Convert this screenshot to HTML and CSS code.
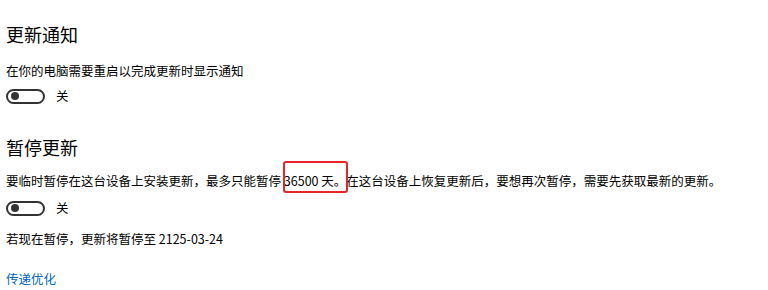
FILE: index.html
```html
<!DOCTYPE html>
<html lang="zh-CN">
<head>
<meta charset="utf-8">
<link rel="stylesheet" href="styles.css">
</head>
<body>
<main class="page">
  <h2 class="title title-first">更新通知</h2>
  <p class="text text-after-title1">在你的电脑需要重启以完成更新时显示通知</p>
  <div class="toggle-row toggle-row-1">
    <span class="toggle"><span class="knob"></span></span>
    <span class="toggle-label">关</span>
  </div>

  <h2 class="title title-second">暂停更新</h2>
  <p class="text text-after-title2">要临时暂停在这台设备上安装更新，最多只能暂停 <span class="mark">36500 天。</span>在这台设备上恢复更新后，要想再次暂停，需要先获取最新的更新。</p>
  <div class="toggle-row toggle-row-2">
    <span class="toggle"><span class="knob"></span></span>
    <span class="toggle-label">关</span>
  </div>
  <p class="text text-pause">若现在暂停，更新将暂停至 2125-03-24</p>
  <a class="link" href="#">传递优化</a>
</main>
</body>
</html>
```
FILE: styles.css
```css
html, body {
  margin: 0;
  padding: 0;
  background: #ffffff;
}

body {
  font-family: "Noto Sans CJK SC", "Noto Sans", sans-serif;
  color: #000000;
}

.page {
  display: flex;
  flex-direction: column;
  align-items: flex-start;
  padding: 22px 0 0 6px;
}

.title {
  margin: 0;
  font-size: 18px;
  line-height: 24px;
  font-weight: 400;
  color: #000;
}

.title-second {
  margin-top: 30px;
}

.text {
  margin: 0;
  font-size: 12.5px;
  line-height: 18px;
  white-space: nowrap;
}

.text-after-title1 {
  margin-top: 16px;
}

.text-after-title2 {
  margin-top: 13px;
}

.text-pause {
  margin-top: 13px;
}

.toggle-row {
  display: flex;
  align-items: center;
  gap: 11px;
  height: 18px;
}

.toggle-row-1 {
  margin-top: 7px;
}

.toggle-row-2 {
  margin-top: 9px;
}

.toggle {
  box-sizing: border-box;
  width: 39px;
  height: 15px;
  border: 2px solid #333333;
  border-radius: 8px;
  display: flex;
  align-items: center;
  padding-left: 3px;
}

.knob {
  width: 8px;
  height: 8px;
  border-radius: 50%;
  background: #333333;
}

.toggle-label {
  font-size: 12.5px;
  line-height: 18px;
}

.mark {
  position: relative;
}

.mark::after {
  content: "";
  position: absolute;
  left: -1px;
  right: -2px;
  top: -10px;
  bottom: -3px;
  border: 2px solid #e8252b;
  border-radius: 3px;
}

.link {
  margin-top: 22px;
  font-size: 12.5px;
  line-height: 18px;
  color: #0067c0;
  text-decoration: none;
}
```
